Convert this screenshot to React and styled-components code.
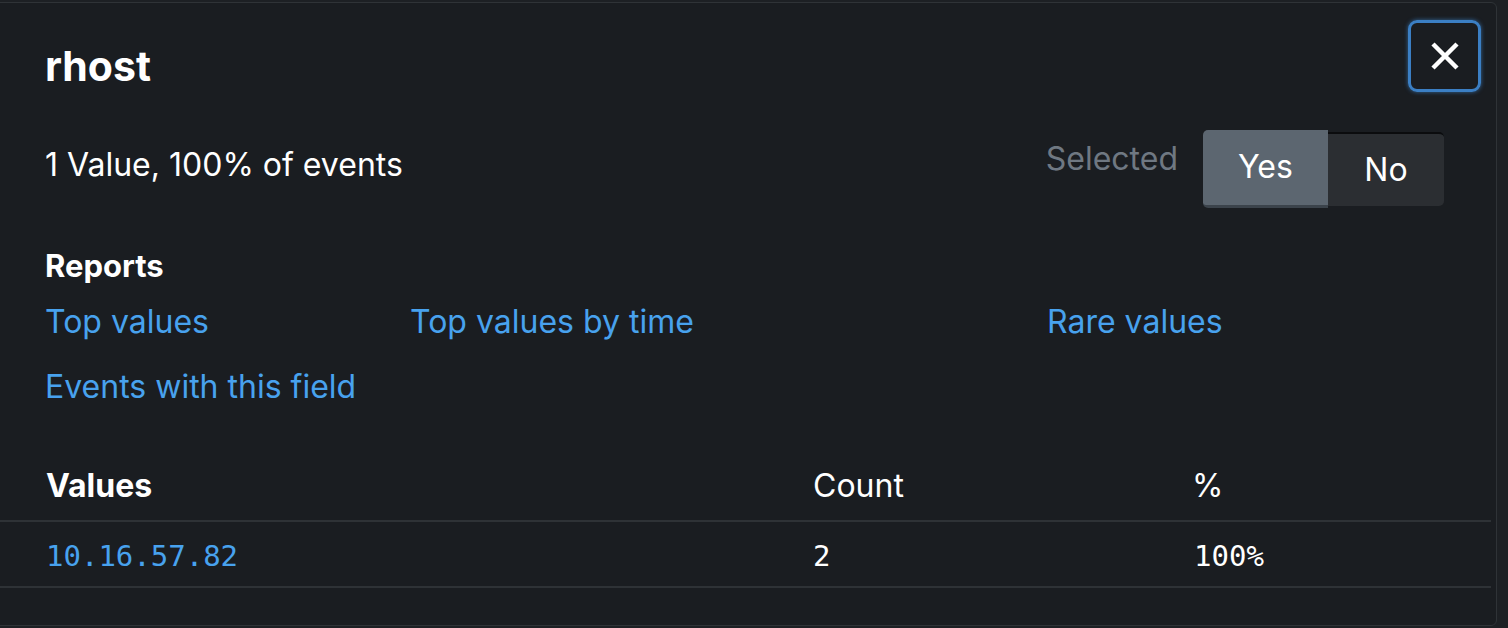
import styled, { createGlobalStyle } from 'styled-components'

const GlobalStyle = createGlobalStyle`
  body {
    margin: 0;
    background: #1d2024;
    font-family: Inter, Lato, "Liberation Sans", sans-serif;
  }
`

const Panel = styled.section`
  box-sizing: border-box;
  width: 1499px;
  height: 624px;
  margin: 2px 0 0 -2px;
  background: #1a1d21;
  border: 1px solid #2f3337;
  border-radius: 0 6px 6px 0;
  color: #fff;
  overflow: hidden;
`

const Content = styled.div`
  padding: 0 0 0 46px;
`

const Header = styled.header`
  display: flex;
  justify-content: space-between;
  align-items: flex-start;
  padding-right: 15px;
`

const Title = styled.h1`
  margin: 37px 0 0;
  font-size: 41px;
  line-height: 52px;
  font-weight: 700;
`

const CloseButton = styled.button`
  box-sizing: border-box;
  width: 73px;
  height: 72px;
  margin-top: 17px;
  display: flex;
  align-items: center;
  justify-content: center;
  background: transparent;
  border: 3px solid #3b7fc4;
  border-radius: 9px;
  box-shadow: 0 0 4px rgba(59, 127, 196, 0.75);
  padding: 0;
`

const Summary = styled.div`
  display: flex;
  justify-content: space-between;
  align-items: flex-start;
  margin-top: 38px;
  padding-right: 52px;
`

const Subtitle = styled.div`
  margin-top: 15px;
  font-size: 32px;
  line-height: 40px;
`

const SelectedGroup = styled.div`
  display: flex;
  align-items: flex-start;
`

const SelectedLabel = styled.span`
  margin: 9px 25px 0 0;
  font-size: 32px;
  line-height: 40px;
  color: #6f7882;
`

const Toggle = styled.div`
  display: flex;
  align-items: flex-start;
`

const ToggleButton = styled.button`
  box-sizing: border-box;
  display: flex;
  align-items: center;
  justify-content: center;
  padding: 0 0 2px;
  font-family: inherit;
  font-size: 32px;
  color: #fff;
  border: none;
  width: ${p => (p.$active ? '125px' : '116px')};
  height: ${p => (p.$active ? '78px' : '74px')};
  margin-top: ${p => (p.$active ? '0' : '2px')};
  background: ${p => (p.$active ? '#5c6670' : '#2b2e32')};
  border-radius: ${p => (p.$active ? '5px 0 0 5px' : '0 5px 5px 0')};
  border-bottom: ${p => (p.$active ? '3px solid #3b434b' : 'none')};
  border-top: ${p => (p.$active ? 'none' : '2px solid #0b0c0e')};
`

const SectionTitle = styled.h2`
  margin: 40px 0 0;
  font-size: 31px;
  line-height: 36px;
  font-weight: 700;
`

const Links = styled.div`
  display: grid;
  grid-template-columns: 365px 637px auto;
  row-gap: 25px;
  margin-top: 18px;
`

const ReportLink = styled.a`
  font-size: 32px;
  line-height: 40px;
  color: #48a2ee;
  text-decoration: none;
`

const Table = styled.div`
  margin: 61px 5px 0 0;
`

const Row = styled.div`
  display: grid;
  grid-template-columns: 814px 381px auto;
  padding: ${p => (p.$head ? '0 0 16px' : '16px 0 12px')};
  border-bottom: 2px solid #2e3236;
`

const HeadCell = styled.div`
  font-size: 32px;
  line-height: 36px;
  font-weight: ${p => (p.$bold ? 700 : 400)};
  padding-left: ${p => (p.$first ? '47px' : '0')};
  margin-left: ${p => p.$nudge || '0'};
`

const Cell = styled.div`
  font-family: "DejaVu Sans Mono", "Liberation Mono", monospace;
  font-size: 29px;
  line-height: 36px;
  color: ${p => (p.$link ? '#48a2ee' : '#fff')};
  padding-left: ${p => (p.$first ? '47px' : '0')};
`

const CloseIcon = () => (
  <svg width="28" height="28" viewBox="0 0 28 28">
    <path d="M2 2 L26 26 M26 2 L2 26" stroke="#fff" strokeWidth="4.5" />
  </svg>
)

export default function App() {
  return (
    <>
      <GlobalStyle />
      <Panel>
        <Content>
          <Header>
            <Title>rhost</Title>
            <CloseButton aria-label="Close">
              <CloseIcon />
            </CloseButton>
          </Header>
          <Summary>
            <Subtitle>1 Value, 100% of events</Subtitle>
            <SelectedGroup>
              <SelectedLabel>Selected</SelectedLabel>
              <Toggle>
                <ToggleButton $active>Yes</ToggleButton>
                <ToggleButton>No</ToggleButton>
              </Toggle>
            </SelectedGroup>
          </Summary>
          <SectionTitle>Reports</SectionTitle>
          <Links>
            <ReportLink href="#">Top values</ReportLink>
            <ReportLink href="#">Top values by time</ReportLink>
            <ReportLink href="#">Rare values</ReportLink>
            <ReportLink href="#">Events with this field</ReportLink>
          </Links>
        </Content>
        <Table>
          <Row $head>
            <HeadCell $bold $first>Values</HeadCell>
            <HeadCell>Count</HeadCell>
            <HeadCell $nudge="-2px">%</HeadCell>
          </Row>
          <Row>
            <Cell $link $first>10.16.57.82</Cell>
            <Cell>2</Cell>
            <Cell>100%</Cell>
          </Row>
        </Table>
      </Panel>
    </>
  )
}
